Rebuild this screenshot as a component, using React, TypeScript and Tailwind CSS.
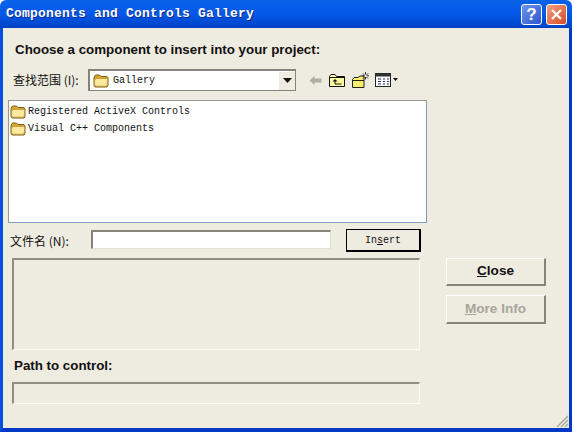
import React from "react";

const mono = "font-['Liberation_Mono','Noto_Sans_CJK_SC',monospace]";
const arial = "font-['Liberation_Sans',Arial,sans-serif]";
const cjk = "font-['Noto_Sans_CJK_SC','Liberation_Sans',sans-serif]";

const Folder: React.FC<{ className?: string }> = ({ className }) => (
  <svg width="16" height="14" viewBox="0 0 16 14" className={className}>
    <path d="M1 3.5 L2.5 1 H6.5 L8 2.5 H14 L15 4 V11.5 L14 13 H2 L1 11.5 Z" fill="#d9a62e" stroke="#7d5f18" strokeWidth="1" />
    <path d="M1.5 6 Q2 4.5 4 4.5 H13.5 Q15 4.5 14.7 6 L14.3 11 Q14 12.2 13 12.2 H3 Q1.8 12.2 1.6 11 Z" fill="#fce9a0" stroke="#b8902e" strokeWidth="0.7" />
  </svg>
);

const ToolIcons: React.FC = () => (
  <div className="flex items-center ml-[13px]">
    {/* back arrow, disabled */}
    <svg width="13" height="11" viewBox="0 0 13 11">
      <path d="M0.5 5.5 L5.5 1 V3.5 H12.5 V7.5 H5.5 V10 Z" fill="#aeaea4" />
    </svg>
    {/* up one level */}
    <svg width="16" height="14" viewBox="0 0 16 14" className="ml-[7px]">
      <path d="M0.5 13.5 V3.5 L2 1.5 H6 L7.5 3.5 H15.5 V13.5 Z" fill="#fbfb9e" stroke="#111" strokeWidth="1" />
      <path d="M0.5 4.5 H15.5" stroke="#111" strokeWidth="1" />
      <path d="M6 6 L3.5 8.5 H8.5 Z" fill="#111" />
      <path d="M6 8 V11 H12.5" fill="none" stroke="#111" strokeWidth="1" />
    </svg>
    {/* new folder */}
    <svg width="17" height="16" viewBox="0 0 17 16" className="ml-[7px]">
      <path d="M0.5 15.5 V7.5 L2 5.5 H6 L8 4 H12 V15.5 Z" fill="#f7ee6e" stroke="#222" strokeWidth="1" />
      <path d="M0.5 8.5 H12" stroke="#222" strokeWidth="1" />
      <path d="M13.5 0 V2.5 M13.5 5 V7.5 M10 3.8 H12.5 M14.5 3.8 H17 M11 1.5 L12.5 3 M16 1.5 L14.5 3 M11 6.5 L12.5 5 M16 6.5 L14.5 5" stroke="#333" strokeWidth="1" />
    </svg>
    {/* view menu */}
    <svg width="17" height="15" viewBox="0 0 17 15" className="ml-[6px]">
      <rect x="0.5" y="0.5" width="15" height="13" fill="#fff" stroke="#222" />
      <rect x="0.5" y="0.5" width="15" height="3" fill="#333" />
      <path d="M3 6 H6 M8 6 H10 M12 6 H14 M3 8.5 H6 M8 8.5 H10 M12 8.5 H14 M3 11 H6 M8 11 H10 M12 11 H14" stroke="#1c2f70" strokeWidth="1.2" />
    </svg>
    <svg width="6" height="4" viewBox="0 0 6 4" className="ml-[1px]">
      <path d="M0 0 H5 L2.5 3 Z" fill="#111" />
    </svg>
  </div>
);

const XpGroove: React.FC<{ className: string }> = ({ className }) => (
  <div className={`border border-t-[2px] border-l-[2px] border-t-[#8f8d84] border-l-[#8f8d84] border-r-[#fbfaf5] border-b-[#fbfaf5] ${className}`} />
);

export default function App() {
  return (
    <div className="w-[574px] h-[432px] bg-white overflow-hidden">
      <div className="w-[572px] h-[432px] flex flex-col rounded-t-[6px] overflow-hidden">
        {/* title bar */}
        <div className="h-[28px] shrink-0 flex items-center justify-between pl-[6px] pr-[5px] bg-gradient-to-b from-[#0a62e8] via-[#0458e8] to-[#0042c4]">
          <span className={`${mono} text-[13px] font-bold tracking-[0.2px] text-white [text-shadow:1px_1px_0_#0a2a90]`}>
            Components and Controls Gallery
          </span>
          <div className="flex gap-[4px]">
            <div className={`${arial} w-[21px] h-[21px] rounded-[3px] border border-white bg-gradient-to-br from-[#6f93ea] to-[#2f55d0] text-white font-bold text-[17px] leading-[19px] text-center`}>
              ?
            </div>
            <div className="w-[21px] h-[21px] rounded-[3px] border border-white bg-gradient-to-br from-[#f0a080] to-[#d8461e] flex items-center justify-center">
              <svg width="13" height="13" viewBox="0 0 13 13">
                <path d="M2 2 L11 11 M11 2 L2 11" stroke="#fff" strokeWidth="2.2" />
              </svg>
            </div>
          </div>
        </div>

        {/* client area */}
        <div className="flex-1 flex border-l-[3px] border-r-[3px] border-b-[4px] border-l-[#0a50e0] border-r-[#0038c8] border-b-[#0038c8] bg-[#eeebe0] relative">
          <div className="w-[424px] pl-[5px] shrink-0 flex flex-col">
            <div className={`${arial} pl-[7px] mt-[14px] h-[16px] text-[13.33px] leading-[16px] font-bold text-[#111]`}>
              Choose a component to insert into your project:
            </div>

            <div className="flex items-center mt-[11px] h-[22px]">
              <div className={`${cjk} w-[80px] pl-[5px] text-[12px] text-[#111] whitespace-nowrap`}>查找范围 (I):</div>
              <div className="w-[208px] h-[22px] flex items-center justify-between bg-white border-t-[2px] border-l-[2px] border-t-[#85837a] border-l-[#85837a] border-r border-b border-r-[#85837a] border-b-[#85837a]">
                <div className="flex items-center pl-[3px]">
                  <Folder />
                  <span className={`${mono} text-[10px] ml-[4px] text-[#111]`}>Gallery</span>
                </div>
                <div className="w-[16px] h-[18px] bg-[#eeebe0] flex items-center justify-center">
                  <svg width="9" height="5" viewBox="0 0 9 5">
                    <path d="M0 0 H9 L4.5 5 Z" fill="#111" />
                  </svg>
                </div>
              </div>
              <ToolIcons />
            </div>

            {/* file list */}
            <div className="mt-[9px] h-[123px] w-[419px] bg-white border border-t-[#9a9a94] border-l-[#9a9a94] border-r-[#7f9db9] border-b-[#7f9db9] pl-[1px] pt-[2px]">
              {["Registered ActiveX Controls", "Visual C++ Components"].map((name) => (
                <div key={name} className="flex items-center h-[17px]">
                  <Folder />
                  <span className={`${mono} text-[10px] ml-[2px] text-[#111] whitespace-nowrap`}>{name}</span>
                </div>
              ))}
            </div>

            <div className="flex items-center mt-[6px] h-[23px]">
              <div className={`${cjk} w-[83px] pl-[2px] text-[12px] text-[#111] whitespace-nowrap`}>文件名 (N):</div>
              <div className="w-[240px] h-[19px] -mt-[2px] bg-white border-t-[2px] border-l-[2px] border-t-[#85837a] border-l-[#85837a] border-r border-b border-r-[#e4e1d3] border-b-[#e4e1d3]" />
              <button className={`${mono} ml-[15px] w-[75px] h-[23px] border border-black border-r-[2px] border-b-[2px] text-[10px] text-[#111] bg-[#eeebe0]`}>
                In<span className="underline">s</span>ert
              </button>
            </div>

            <XpGroove className="ml-[4px] mt-[6px] w-[408px] h-[92px]" />

            <div className={`${arial} pl-[6px] mt-[8px] h-[16px] text-[13.33px] leading-[16px] font-bold text-[#111]`}>
              Path to control:
            </div>
            <XpGroove className="ml-[4px] mt-[8px] w-[408px] h-[22px]" />
          </div>

          {/* right buttons */}
          <div className="ml-[19px] pt-[230px] flex flex-col gap-[9px]">
            <button className={`${arial} w-[100px] h-[28px] bg-[#eeebe0] border border-t-white border-l-white border-r-[#85837a] border-b-[#85837a] border-b-[2px] border-r-[2px] text-[13.6px] font-bold text-[#111]`}>
              <span className="underline">C</span>lose
            </button>
            <button className={`${arial} w-[100px] h-[29px] bg-[#eeebe0] border border-t-white border-l-white border-r-[#85837a] border-b-[#85837a] border-b-[2px] border-r-[2px] text-[13.6px] font-bold text-[#a7a69a]`}>
              <span className="underline">M</span>ore Info
            </button>
          </div>

          {/* size grip */}
          <svg width="13" height="13" viewBox="0 0 13 13" className="absolute right-0 bottom-0">
            <path d="M12 1 L1 12 M12 5 L5 12 M12 9 L9 12" stroke="#a5a294" strokeWidth="1.2" />
          </svg>
        </div>
      </div>
    </div>
  );
}
